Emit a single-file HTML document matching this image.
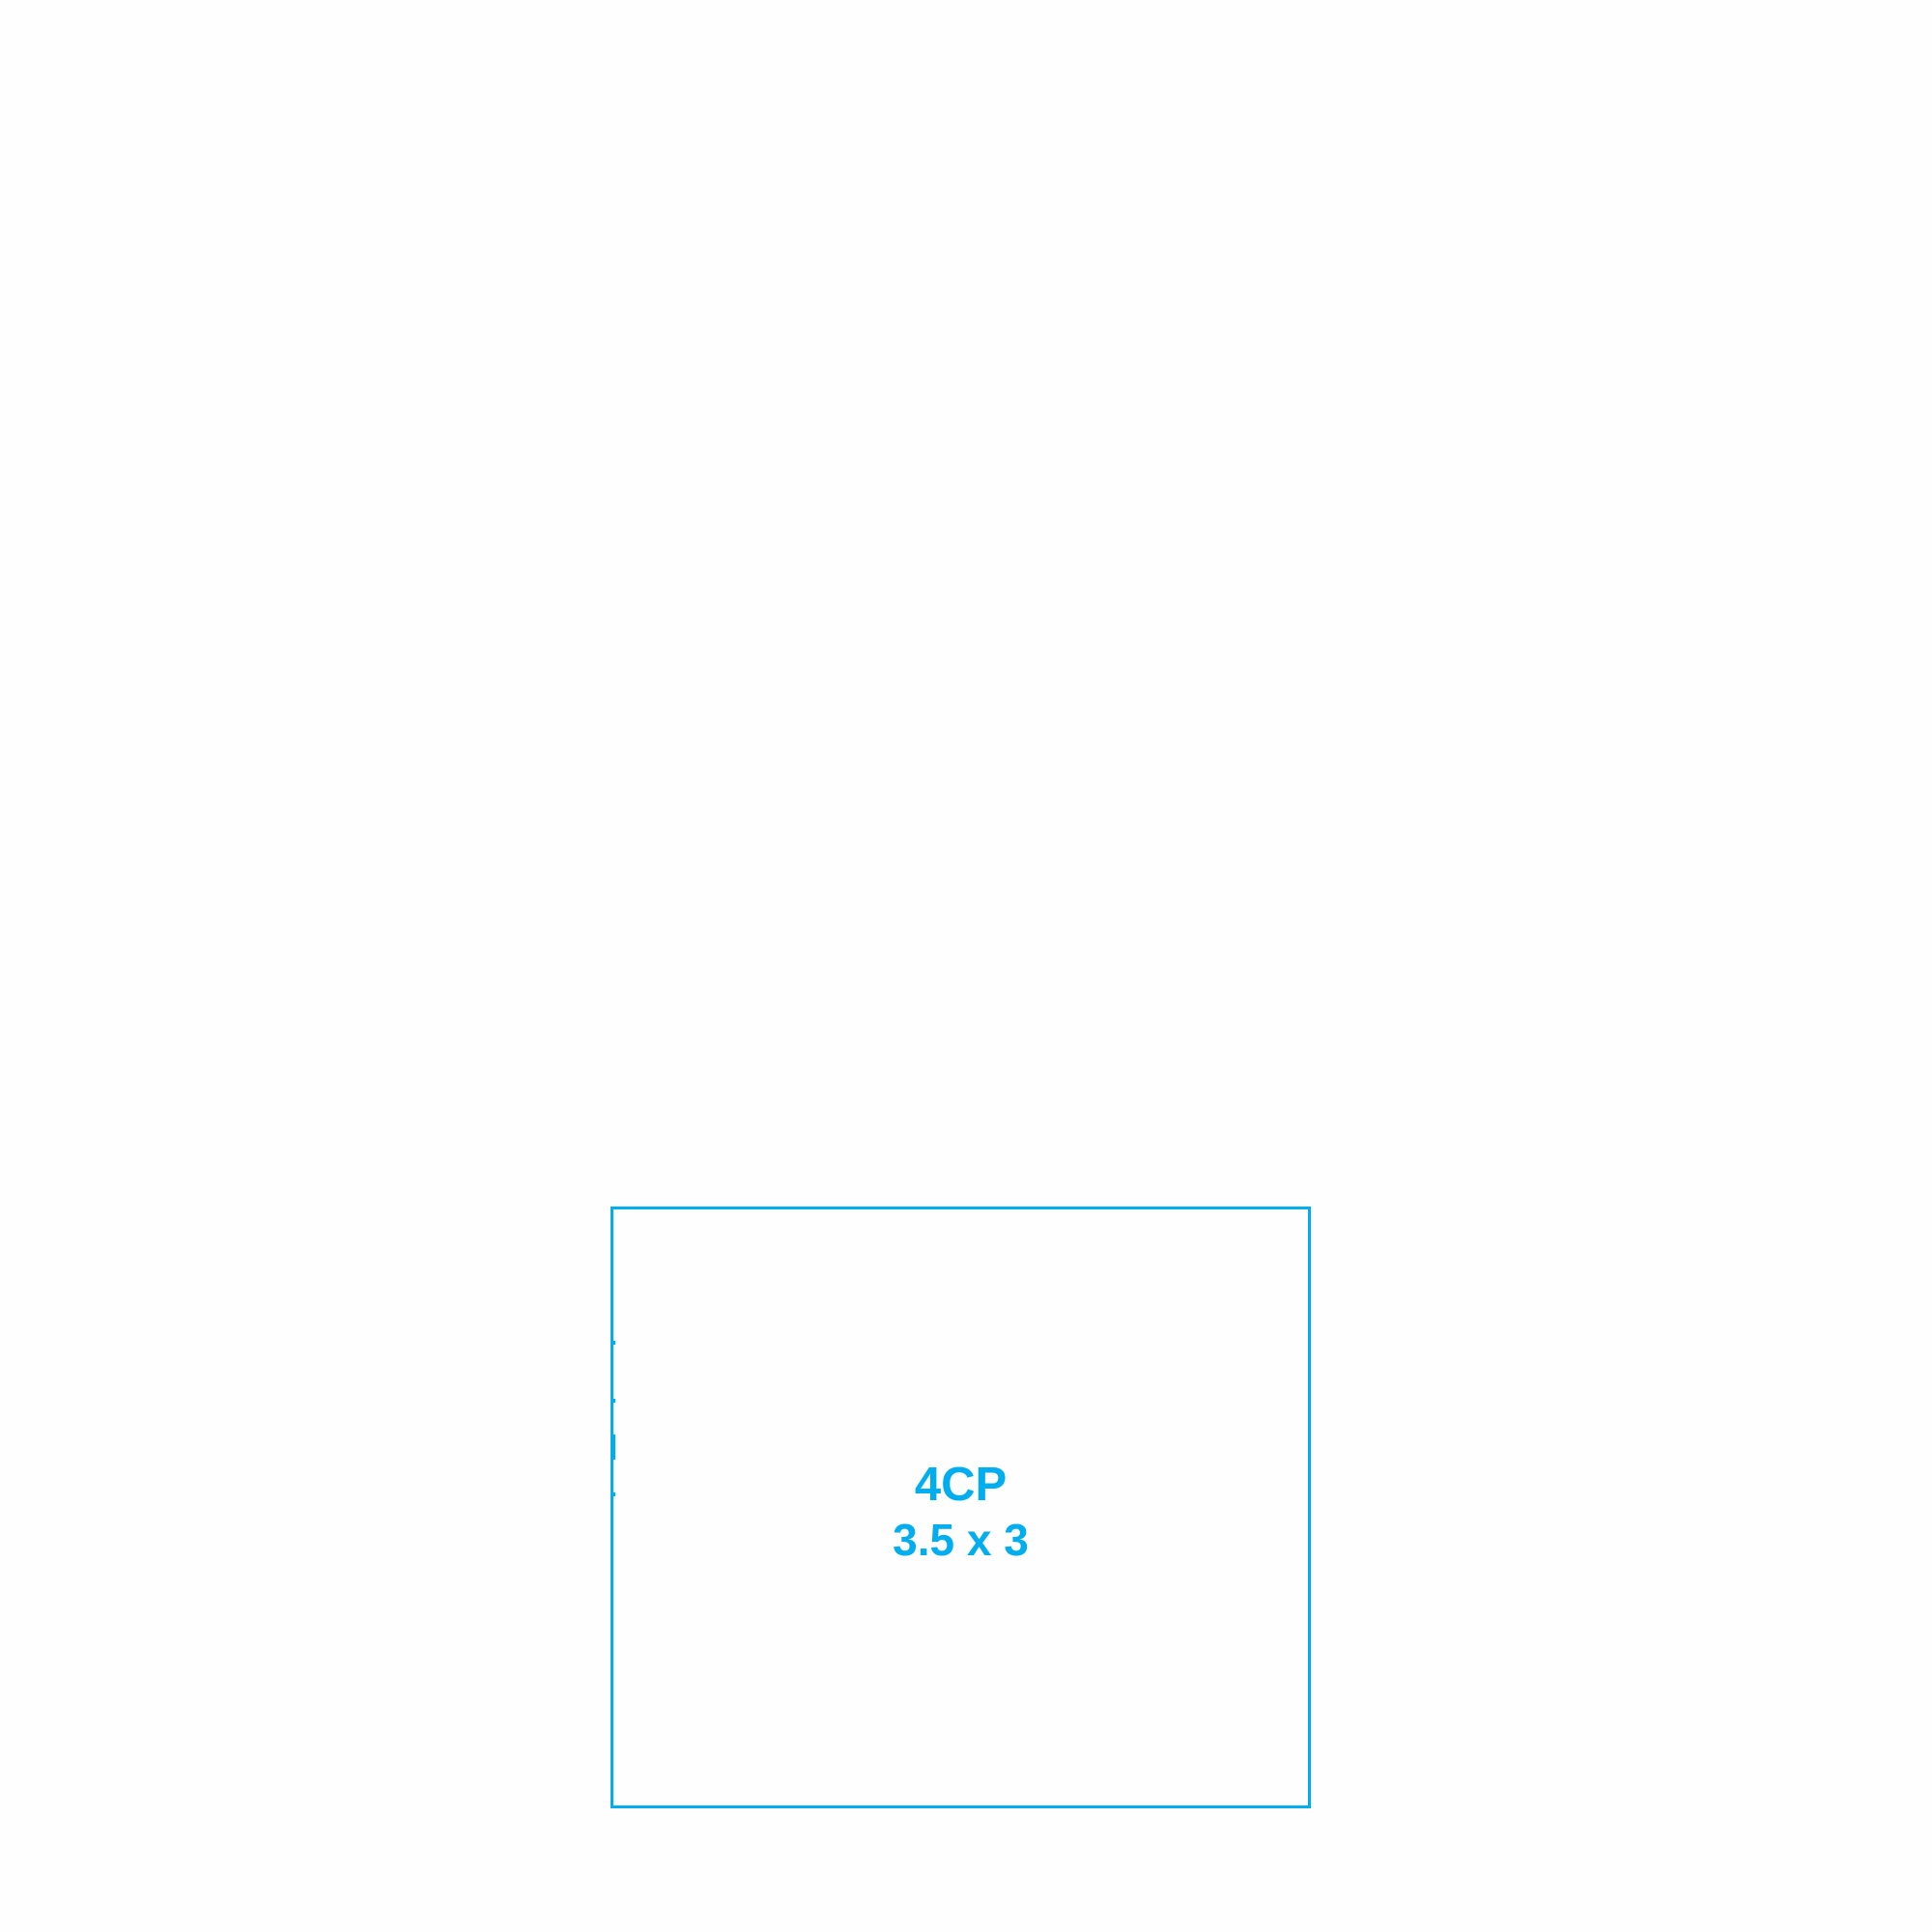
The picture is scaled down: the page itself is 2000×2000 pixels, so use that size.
<!DOCTYPE html>
<html><head><meta charset="utf-8"><style>
html,body{margin:0;padding:0;background:#fefefe;width:2000px;height:2000px;overflow:hidden;position:relative}
.box{position:absolute;left:632px;top:1249px;width:719px;height:617px;border:3px solid #00aeef}
.t{position:absolute;left:632px;width:725px;text-align:center;color:#00aeef;font-family:"Liberation Sans",sans-serif;font-weight:bold}
.tick{position:absolute;left:635px;width:2px;background:#00aeef}
</style></head><body>
<div class="box"></div>
<div class="tick" style="top:1388px;height:4px"></div>
<div class="tick" style="top:1448px;height:4px"></div>
<div class="tick" style="top:1485px;height:26px"></div>
<div class="tick" style="top:1545px;height:4px"></div>
<div class="t" style="top:1513px;font-size:49px;line-height:49px">4CP</div>
<div class="t" style="top:1571px;font-size:46px;line-height:46px">3.5 x 3</div>
</body></html>
